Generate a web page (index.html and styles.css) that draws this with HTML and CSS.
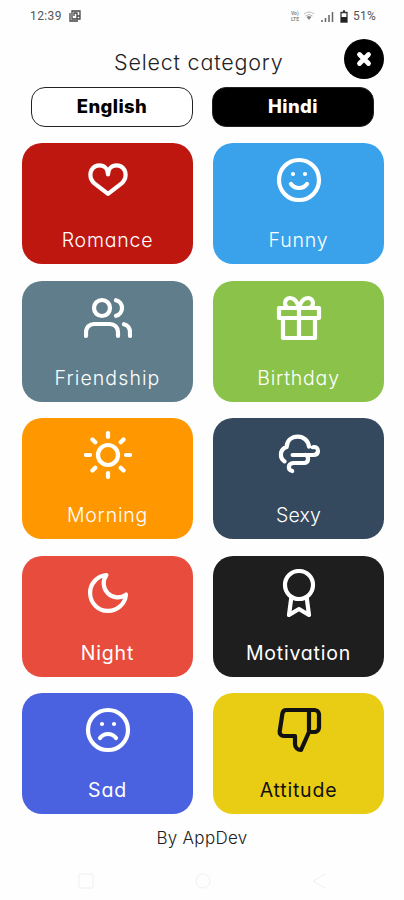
FILE: index.html
```html
<!DOCTYPE html>
<html lang="en">
<head>
  <meta charset="UTF-8">
  <meta name="viewport" content="width=device-width, initial-scale=1.0">
  <title>Select category</title>
  <link rel="stylesheet" href="styles.css">
</head>
<body>
  <div class="status-bar">
    <span class="time">12:39</span>
    <svg class="note" width="12" height="12" viewBox="0 0 12 12"><path d="M3 1h8v8H3zM1 3v8h8M5 6V3h3v3M8 9V6h3" fill="none" stroke="#444" stroke-width="1.3"/></svg>
    <div class="volte"><span>Vo)</span><span>LTE</span></div>
    <svg class="wifi" width="12" height="10" viewBox="0 0 12 10"><path d="M1 3Q6-1 11 3M2.500 5Q6 2 9.500 5" fill="none" stroke="#bbb"/><path d="M3.500 6Q6 4 8.500 6L6 9z" fill="#888"/></svg>
    <svg class="signal" width="13" height="11" viewBox="0 0 13 11"><path d="M1 11V9M4.500 11V7M8 11V4M11.500 11V1" stroke="#666" stroke-width="1.5"/></svg>
    <svg class="battery" width="8" height="13" viewBox="0 0 8 13"><path d="M1 2.500h6v9.500H1zM3 1h2" fill="none" stroke="#333" stroke-width="1.300"/><path d="M1 7h6v5H1z" fill="#222"/></svg>
    <span class="percent">51%</span>
  </div>

  <header>
    <h1>Select category</h1>
    <button class="close" aria-label="Close">
      <svg width="18" height="18" viewBox="0 0 18 18"><path d="M4.500 4.500l9 9M13.500 4.500l-9 9" stroke="#fff" stroke-width="4.800" stroke-linecap="round"/></svg>
    </button>
  </header>

  <div class="languages">
    <button class="lang">English</button>
    <button class="lang active">Hindi</button>
  </div>

  <main class="categories">
    <div class="card romance">
      <svg class="icon" viewBox="0 0 24 24"><path d="M12 18.900L5.200 13.700C3.900 12.600 3.200 11.100 3.200 9.400C3.200 6.700 5.200 4.700 7.700 4.700C10.200 4.700 12 6.500 12 9.200C12 6.500 13.800 4.700 16.300 4.700C18.800 4.700 20.800 6.700 20.800 9.400C20.800 11.100 20.100 12.600 18.800 13.700z"/></svg>
      <span>Romance</span>
    </div>
    <div class="card funny">
      <svg class="icon" viewBox="0 0 24 24"><circle cx="12" cy="12" r="10"/><path d="M8 14s1.500 2 4 2 4-2 4-2M9 9h.01M15 9h.01"/></svg>
      <span>Funny</span>
    </div>
    <div class="card friendship">
      <svg class="icon" viewBox="0 0 24 24"><path d="M17 21v-2a4 4 0 0 0-4-4H5a4 4 0 0 0-4 4v2"/><circle cx="9" cy="7" r="4"/><path d="M23 21v-2a4 4 0 0 0-3-3.870M16 3.130a4 4 0 0 1 0 7.750"/></svg>
      <span>Friendship</span>
    </div>
    <div class="card birthday">
      <svg class="icon" viewBox="0 0 24 24"><path d="M20 12v10H4V12M2 7h20v5H2zM12 22V7M12 7H7.500a2.500 2.500 0 0 1 0-5C11 2 12 7 12 7zM12 7h4.500a2.500 2.500 0 0 0 0-5C13 2 12 7 12 7z"/></svg>
      <span>Birthday</span>
    </div>
    <div class="card morning">
      <svg class="icon" viewBox="0 0 24 24"><circle cx="12" cy="12" r="5"/><path d="M12 1v2M12 21v2M4.220 4.220l1.420 1.420M18.360 18.360l1.420 1.420M1 12h2M21 12h2M4.220 19.780l1.420-1.420M18.360 5.640l1.420-1.420"/></svg>
      <span>Morning</span>
    </div>
    <div class="card sexy">
      <svg class="icon" viewBox="0 0 24 24"><path d="M4.800 15.200C2.200 13.500 2.200 9.200 5.800 8C6 4.800 8.300 2.800 11.400 2.800C14.400 2.800 16.600 4.900 17 7.800M18.900 8.100C20.500 7.700 21.600 8.700 21.500 10C21.400 11.300 20.500 12 19.200 12H8.800M15.300 12C17 12.500 17 15.800 14.800 16H9.200C6.300 16.200 6.300 19.500 8.600 20"/></svg>
      <span>Sexy</span>
    </div>
    <div class="card night">
      <svg class="icon" viewBox="0 0 24 24"><path d="M21 12.790A9 9 0 1 1 11.210 3 7 7 0 0 0 21 12.790z"/></svg>
      <span>Night</span>
    </div>
    <div class="card motivation">
      <svg class="icon" viewBox="0 0 24 24"><circle cx="12" cy="8" r="7"/><path d="M8.210 13.890L7 23l5-3 5 3-1.210-9.120"/></svg>
      <span>Motivation</span>
    </div>
    <div class="card sad">
      <svg class="icon" viewBox="0 0 24 24"><circle cx="12" cy="12" r="10"/><path d="M16 16s-1.500-2-4-2-4 2-4 2M9 9h.01M15 9h.01"/></svg>
      <span>Sad</span>
    </div>
    <div class="card attitude">
      <svg class="icon" viewBox="0 0 24 24"><path d="M10 15v4a3 3 0 0 0 3 3l4-9V2H5.720a2 2 0 0 0-2 1.700l-1.380 9a2 2 0 0 0 2 2.300zM17 2h2.670A2.310 2.310 0 0 1 22 4v7a2.310 2.310 0 0 1-2.330 2H17"/></svg>
      <span>Attitude</span>
    </div>
  </main>

  <footer>By AppDev</footer>

  <nav>
    <svg viewBox="0 0 16 16"><path d="M1 1h14v14H1z"/></svg>
    <svg viewBox="0 0 16 16"><circle cx="8" cy="8" r="7"/></svg>
    <svg viewBox="0 0 16 16"><path d="M14 1L2 8l12 7"/></svg>
  </nav>
</body>
</html>
```
FILE: styles.css
```css
* {
  box-sizing: border-box;
}
body {
  margin: 0;
  height: 900px;
  overflow: hidden;
  background-color: #fefefe;
  color: #222;
  font-family: Inter, "Liberation Sans", sans-serif;
  font-feature-settings: "cv11";
}
.status-bar {
  display: flex;
  align-items: center;
  height: 32px;
  padding: 0 27px 0 30px;
  font-family: Roboto, sans-serif;
  font-size: 12px;
  color: #555;
}
.time {
  width: 39px;
  letter-spacing: 0.4px;
}
.volte {
  display: flex;
  flex-direction: column;
  margin-left: auto;
  font-size: 5px;
  line-height: 6px;
  font-weight: bold;
  color: #888;
}
.wifi {
  margin-left: 4px;
}
.signal {
  margin-left: 6px;
}
.battery {
  margin-left: 6px;
}
.percent {
  margin-left: 5px;
  width: 24px;
  letter-spacing: 0.2px;
}
header {
  display: flex;
  align-items: center;
  height: 54px;
  padding: 0 20px 0 114px;
}
h1 {
  margin: 5px 0 0;
  font-size: 21.5px;
  font-weight: 300;
  letter-spacing: 0.8px;
  white-space: nowrap;
}
button {
  padding: 0;
  border: none;
  font-family: inherit;
}
.close {
  display: flex;
  align-items: center;
  justify-content: center;
  width: 40px;
  height: 40px;
  margin-left: auto;
  border-radius: 50%;
  background-color: #000;
}
.languages {
  display: grid;
  grid-template-columns: 162px 162px;
  column-gap: 19px;
  padding: 1px 0 0 31px;
}
.lang {
  height: 40px;
  padding-bottom: 2px;
  border: 1px solid #222;
  border-radius: 14px;
  background-color: #fff;
  color: #000;
  font-size: 18.5px;
  font-weight: 800;
  letter-spacing: 0.4px;
}
.lang.active {
  background-color: #000;
  color: #fff;
}
.categories {
  display: grid;
  grid-template-columns: 171px 171px;
  grid-auto-rows: 121px;
  gap: 16.6px 20px;
  padding: 16px 0 0 22px;
}
.card {
  display: flex;
  flex-direction: column;
  align-items: center;
  padding-top: 13px;
  border-radius: 20px;
  color: #fff;
  font-size: 19.5px;
  font-weight: 300;
  letter-spacing: 0.8px;
}
.card span {
  margin-top: 24px;
  line-height: 25px;
}
.icon {
  width: 48px;
  height: 48px;
  fill: none;
  stroke: currentColor;
  stroke-width: 2.1;
  stroke-linecap: round;
  stroke-linejoin: round;
}
.romance {
  background-color: #bd1710;
}
.funny {
  background-color: #3aa2eb;
}
.friendship {
  background-color: #607d8b;
  letter-spacing: 1.1px;
}
.birthday {
  background-color: #8bc34a;
}
.morning {
  background-color: #ff9800;
}
.sexy {
  background-color: #34495e;
  letter-spacing: 0.2px;
}
.night {
  background-color: #e74c3c;
}
.motivation {
  background-color: #1e1e1e;
}
.sad {
  background-color: #4a62e0;
}
.attitude {
  background-color: #e9cd14;
  color: #111;
}
.night, .motivation, .sad, .attitude {
  font-weight: 400;
}
footer {
  height: 46px;
  padding-top: 12px;
  text-align: center;
  font-size: 17px;
  font-weight: 300;
  line-height: 24px;
  letter-spacing: 0.3px;
}
nav {
  display: flex;
  justify-content: space-between;
  padding: 13px 77px 0 78px;
}
nav svg {
  width: 16px;
  height: 16px;
  fill: none;
  stroke: #f0f0f0;
}
```
